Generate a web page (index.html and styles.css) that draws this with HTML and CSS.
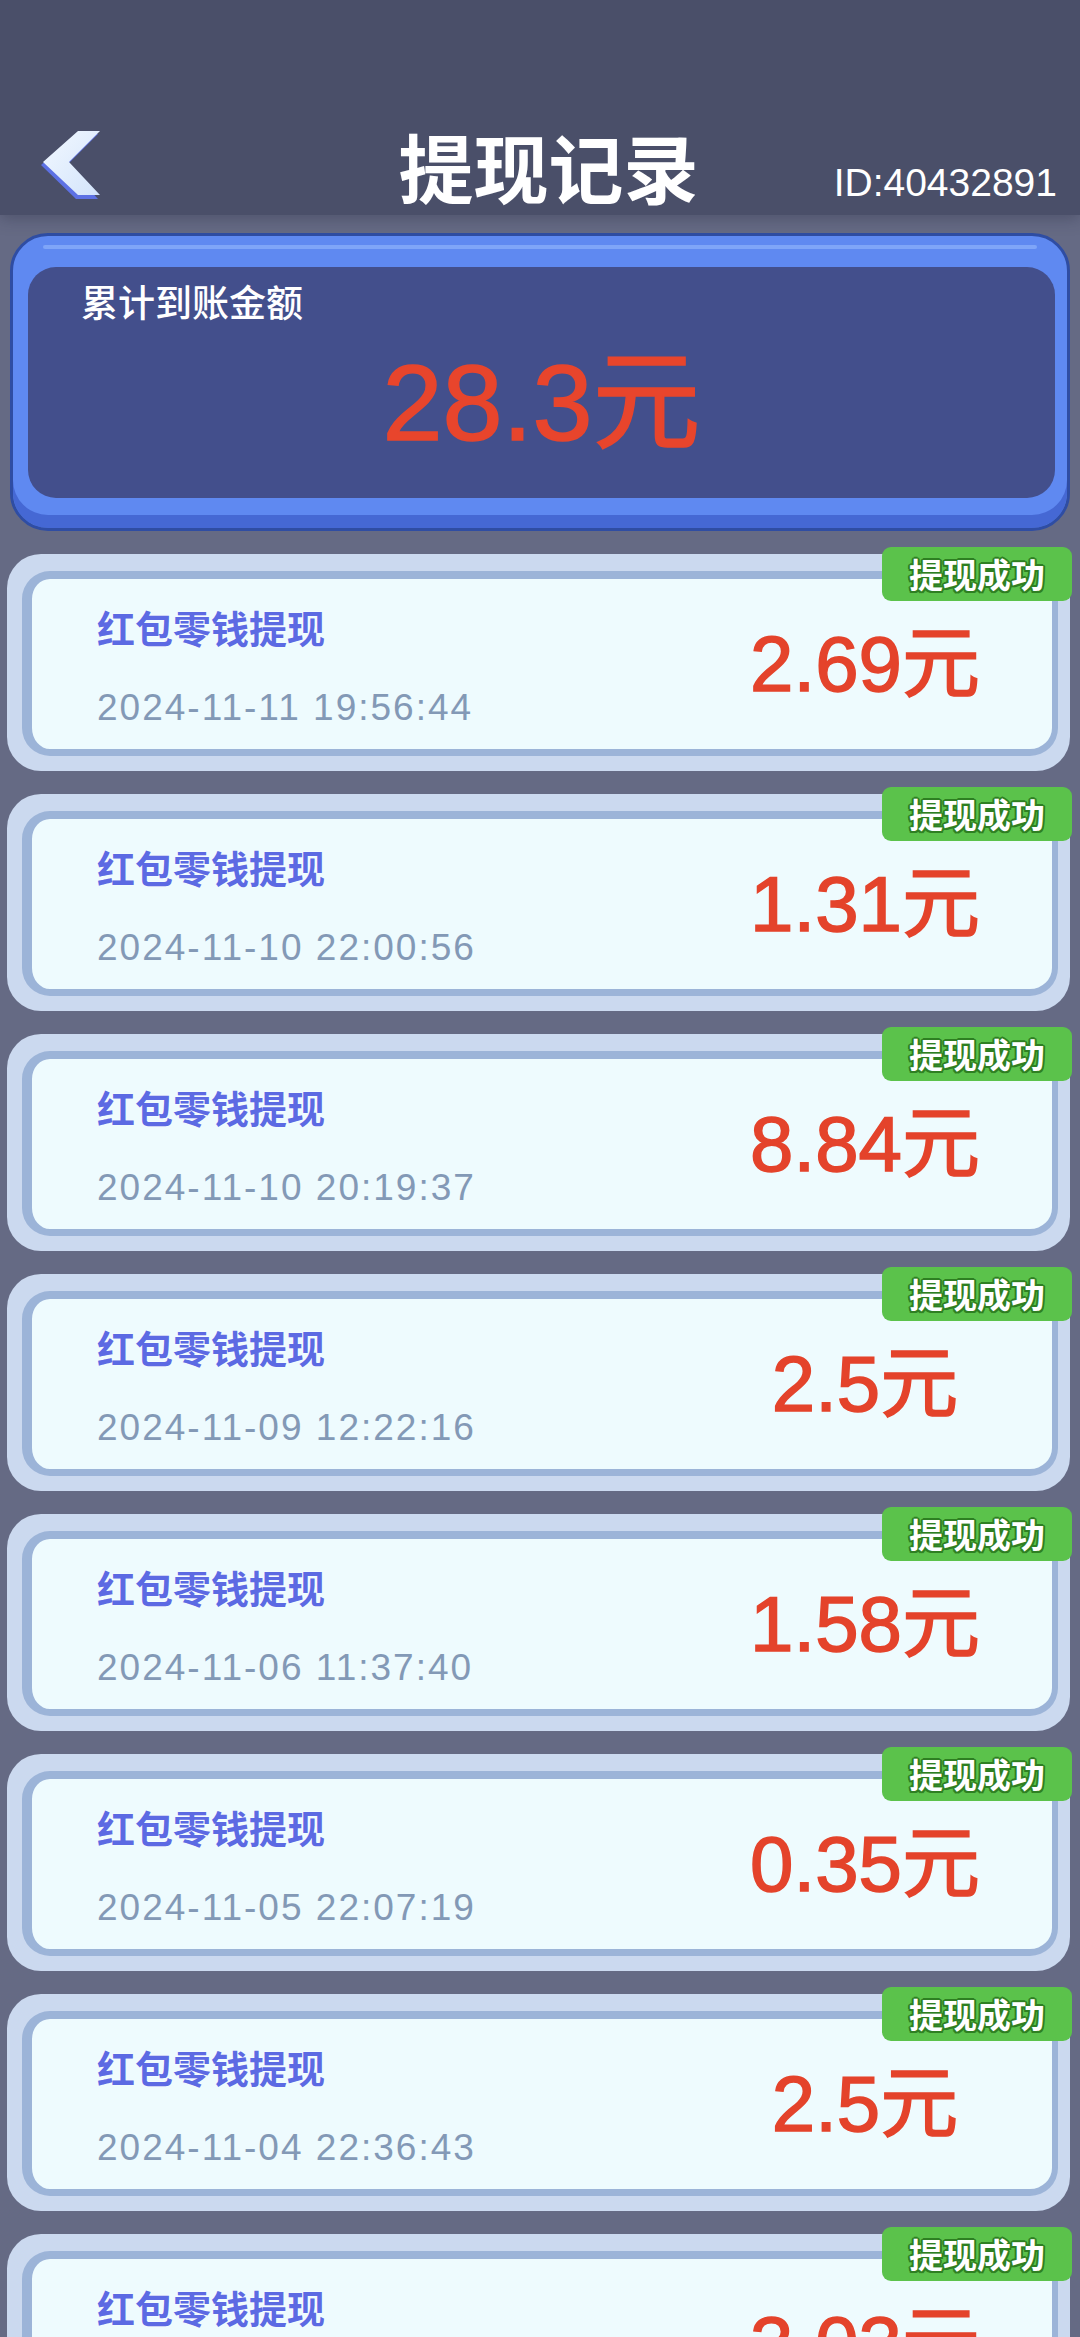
FILE: index.html
```html
<!DOCTYPE html>
<html lang="zh-CN">
<head>
<meta charset="utf-8">
<title>提现记录</title>
<link rel="stylesheet" href="styles.css">
</head>
<body>
<div class="page">
  <header class="header">
    <div class="back">
      <svg width="66" height="74" viewBox="0 0 66 74" aria-hidden="true">
        <defs>
          <linearGradient id="arrowFill" x1="0" y1="0" x2="1" y2="1">
            <stop offset="0" stop-color="#f2f8ff"/>
            <stop offset="1" stop-color="#d3e4fb"/>
          </linearGradient>
        </defs>
        <polygon points="36,5 58,5 27,36 58,70 36,70 1,36" fill="#5d71e4"/>
        <polygon points="38,2 60,2 29,33 60,66 38,66 3,33" fill="url(#arrowFill)"/>
      </svg>
    </div>
    <h1 class="title">提现记录</h1>
    <div class="uid">ID:40432891</div>
  </header>

  <main class="content">
    <section class="summary">
      <div class="summary-inner">
        <div class="summary-label">累计到账金额</div>
        <div class="summary-amount">28.3元</div>
      </div>
    </section>

    <div class="record">
      <div class="badge">提现成功</div>
      <div class="panel">
        <div class="info">
          <div class="rec-title">红包零钱提现</div>
          <div class="rec-date">2024-11-11 19:56:44</div>
        </div>
        <div class="amount">2.69元</div>
      </div>
    </div>

    <div class="record">
      <div class="badge">提现成功</div>
      <div class="panel">
        <div class="info">
          <div class="rec-title">红包零钱提现</div>
          <div class="rec-date">2024-11-10 22:00:56</div>
        </div>
        <div class="amount">1.31元</div>
      </div>
    </div>

    <div class="record">
      <div class="badge">提现成功</div>
      <div class="panel">
        <div class="info">
          <div class="rec-title">红包零钱提现</div>
          <div class="rec-date">2024-11-10 20:19:37</div>
        </div>
        <div class="amount">8.84元</div>
      </div>
    </div>

    <div class="record">
      <div class="badge">提现成功</div>
      <div class="panel">
        <div class="info">
          <div class="rec-title">红包零钱提现</div>
          <div class="rec-date">2024-11-09 12:22:16</div>
        </div>
        <div class="amount">2.5元</div>
      </div>
    </div>

    <div class="record">
      <div class="badge">提现成功</div>
      <div class="panel">
        <div class="info">
          <div class="rec-title">红包零钱提现</div>
          <div class="rec-date">2024-11-06 11:37:40</div>
        </div>
        <div class="amount">1.58元</div>
      </div>
    </div>

    <div class="record">
      <div class="badge">提现成功</div>
      <div class="panel">
        <div class="info">
          <div class="rec-title">红包零钱提现</div>
          <div class="rec-date">2024-11-05 22:07:19</div>
        </div>
        <div class="amount">0.35元</div>
      </div>
    </div>

    <div class="record">
      <div class="badge">提现成功</div>
      <div class="panel">
        <div class="info">
          <div class="rec-title">红包零钱提现</div>
          <div class="rec-date">2024-11-04 22:36:43</div>
        </div>
        <div class="amount">2.5元</div>
      </div>
    </div>

    <div class="record">
      <div class="badge">提现成功</div>
      <div class="panel">
        <div class="info">
          <div class="rec-title">红包零钱提现</div>
          <div class="rec-date">2024-11-03 18:42:05</div>
        </div>
        <div class="amount">3.03元</div>
      </div>
    </div>
  </main>
</div>
</body>
</html>
```

FILE: styles.css
```css
* {
  box-sizing: border-box;
}

html, body {
  margin: 0;
  padding: 0;
}

body {
  width: 1080px;
  height: 2337px;
  overflow: hidden;
  background: #656a84;
  font-family: "Liberation Sans", "Noto Sans CJK SC", sans-serif;
}

.page {
  width: 1080px;
}

/* ---------- header ---------- */
.header {
  height: 215px;
  padding: 116px 23px 0 40px;
  background: #4a4f69;
  display: grid;
  grid-template-columns: 1fr auto 1fr;
  align-items: center;
  box-shadow: 0 4px 14px rgba(40, 44, 66, 0.35);
  position: relative;
  z-index: 1;
}

.back {
  display: flex;
  align-items: center;
  height: 99px;
}

.back svg {
  display: block;
}

.title {
  margin: 0;
  font-family: "Noto Sans CJK SC", sans-serif;
  font-size: 75px;
  line-height: 1;
  font-weight: 700;
  color: #ffffff;
}

.uid {
  justify-self: end;
  align-self: end;
  margin-bottom: 13px;
  font-size: 39px;
  line-height: 1;
  color: #ffffff;
}

/* ---------- content ---------- */
.content {
  padding: 18px 10px 0 7px;
  display: flex;
  flex-direction: column;
  gap: 23px;
}

.summary {
  margin-left: 3px;
  position: relative;
  border: 3px solid #2f4da3;
  border-radius: 38px;
  background: #5f89f1;
  padding: 31px 12px 30px 15px;
  box-shadow: inset 0 -13px 0 #4568d4;
}

.summary::before {
  content: "";
  position: absolute;
  left: 30px;
  right: 30px;
  top: 9px;
  height: 4px;
  border-radius: 2px;
  background: #7fa5f8;
}

.summary-inner {
  height: 231px;
  border-radius: 28px;
  background: #434f8c;
  padding: 16px 0 0 53px;
}

.summary-label {
  font-family: "Noto Sans CJK SC", sans-serif;
  font-size: 37px;
  line-height: 1;
  font-weight: 500;
  color: #ffffff;
}

.summary-amount {
  margin: 29px 0 0 -53px;
  text-align: center;
  font-size: 108px;
  line-height: 1;
  color: #e8452c;
  -webkit-text-stroke: 1.5px #e8452c;
}

/* ---------- record card ---------- */
.record {
  position: relative;
  height: 217px;
  border-radius: 34px;
  background: #cbd9ef;
  padding: 17px 12px 15px 15px;
}

.panel {
  height: 100%;
  border-style: solid;
  border-color: #9cb4d8;
  border-width: 8px 6px 7px 10px;
  border-radius: 28px;
  background: #eefbfe;
  display: flex;
  align-items: center;
}

.info {
  flex: 1;
  align-self: stretch;
  padding: 29px 0 0 65px;
}

.rec-title {
  font-family: "Noto Sans CJK SC", sans-serif;
  font-size: 38px;
  line-height: 1;
  font-weight: 700;
  color: #5c6ae3;
  text-shadow: 0 0 2px #ffffff;
}

.rec-date {
  margin-top: 43px;
  font-size: 37px;
  line-height: 1;
  letter-spacing: 2px;
  color: #8399b6;
}

.amount {
  width: 300px;
  margin-right: 37px;
  text-align: center;
  font-size: 78px;
  line-height: 1;
  color: #e4432b;
  -webkit-text-stroke: 1.5px #e4432b;
}

.badge {
  position: absolute;
  top: -7px;
  right: -2px;
  width: 190px;
  height: 54px;
  border-radius: 9px;
  background: #5bc24b;
  display: flex;
  align-items: center;
  justify-content: center;
  font-family: "Noto Sans CJK SC", sans-serif;
  font-size: 34px;
  line-height: 1;
  font-weight: 700;
  color: #ffffff;
  text-shadow:
    2px 0 0 #2e7f22, -2px 0 0 #2e7f22, 0 2px 0 #2e7f22, 0 -2px 0 #2e7f22,
    1.5px 1.5px 0 #2e7f22, -1.5px 1.5px 0 #2e7f22, 1.5px -1.5px 0 #2e7f22, -1.5px -1.5px 0 #2e7f22;
}
```
